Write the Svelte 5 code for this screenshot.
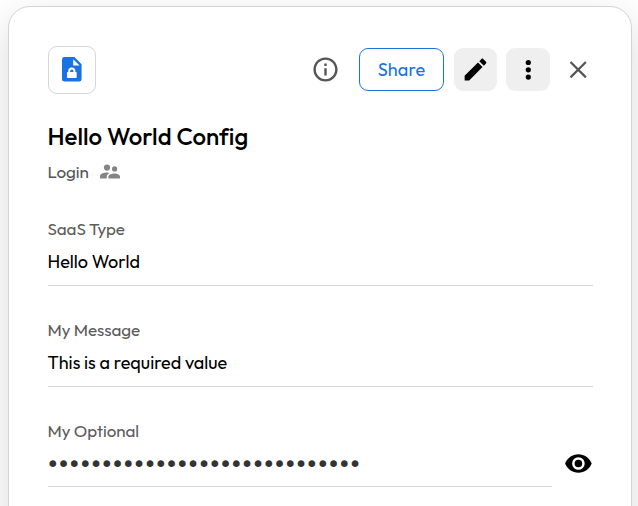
<script>
  const fields = [
    { label: 'SaaS Type', value: 'Hello World' },
    { label: 'My Message', value: 'This is a required value' },
  ];
  const masked = '•'.repeat(29);
</script>

<main class="page">
  <section class="card">
    <header class="toolbar">
      <div class="filebox">
        <svg width="20" height="25" viewBox="0 0 20 25">
          <path fill="#1a73df" fill-rule="evenodd" d="M2.4 0H12.4L19.6 7.2V22.2Q19.6 24.6 17.2 24.6H2.4Q0 24.6 0 22.2V2.4Q0 0 2.4 0ZM11.2 2.3V8.6H17.6ZM5 15.7Q5 15 5.7 15H6.2V14.2A3.6 3.6 0 0 1 13.4 14.2V15H14Q14.7 15 14.7 15.7V20.2Q14.7 20.9 14 20.9H5.7Q5 20.9 5 20.2ZM8.2 15H11.4V14.2A1.6 1.6 0 0 0 8.2 14.2Z" />
        </svg>
      </div>
      <div class="actions">
        <svg class="info" width="29" height="29" viewBox="0 0 24 24" fill="#555">
          <path d="M11 7h2v2h-2zm0 4h2v6h-2zm1-9C6.48 2 2 6.48 2 12s4.48 10 10 10 10-4.480 10-10S17.520 2 12 2m0 18c-4.410 0-8-3.590-8-8s3.590-8 8-8 8 3.590 8 8-3.590 8-8 8" />
        </svg>
        <button class="share">Share</button>
        <button class="square edit" aria-label="Edit">
          <svg width="29" height="29" viewBox="0 0 24 24"><path d="M3 17.250V21h3.750L17.810 9.940l-3.750-3.750zM20.710 7.040c.39-.39.39-1.020 0-1.410l-2.340-2.340c-.39-.39-1.020-.39-1.410 0l-1.830 1.830 3.750 3.750z" /></svg>
        </button>
        <button class="square more" aria-label="More">
          <svg width="6" height="22" viewBox="0 0 6 22"><circle cx="3.300" cy="3.500" r="2.600" /><circle cx="3.300" cy="10.800" r="2.600" /><circle cx="3.300" cy="18.100" r="2.600" /></svg>
        </button>
        <button class="close" aria-label="Close">
          <svg width="18" height="18" viewBox="0 0 18 18"><path d="M1.500 1L16.900 16.400M16.900 1L1.500 16.400" fill="none" stroke="#555" stroke-width="2.200" /></svg>
        </button>
      </div>
    </header>

    <h1>Hello World Config</h1>
    <div class="kind">
      <span>Login</span>
      <svg width="20" height="15" viewBox="0 0 20 15" fill="#858585">
        <circle cx="7" cy="3.600" r="3.100" />
        <circle cx="14.600" cy="4.900" r="2.600" />
        <path d="M0 14.500V12.200C0 9.400 4.500 8.500 7 8.500Q8.400 8.500 9.800 8.900C7.700 10 6.800 11 6.800 12.500V14.500ZM8.400 14.500V12.700C8.400 10.500 12 9.400 14.400 9.400S20 10.500 20 12.700V14.500Z" />
      </svg>
    </div>

    {#each fields as field}
      <div class="field">
        <div class="label">{field.label}</div>
        <div class="value">{field.value}</div>
      </div>
    {/each}
    <div class="secret">
      <div class="field">
        <div class="label">My Optional</div>
        <div class="value dots">{masked}</div>
      </div>
      <svg class="eye" width="28" height="19" viewBox="0 0 28 19">
        <path fill-rule="evenodd" d="M14.400 .2C20.400 .2 25.600 4 27.700 9.500C25.600 15 20.400 18.800 14.400 18.800S3.200 15 1.100 9.500C3.200 4 8.400 .2 14.400 .2ZM14.400 3.200A6.300 6.300 0 1 0 14.400 15.800A6.300 6.300 0 1 0 14.400 3.200ZM14.400 5.700A3.800 3.800 0 1 1 14.400 13.300A3.800 3.800 0 1 1 14.400 5.700Z" />
      </svg>
    </div>
  </section>
</main>

<style>
  .page {
    box-sizing: border-box;
    width: 638px;
    height: 506px;
    overflow: hidden;
    padding: 6px 6px 0 8px;
    background: #fff;
    font-family: Outfit, Lato, sans-serif;
    color: #000;
  }
  .card {
    box-sizing: border-box;
    height: 700px;
    padding: 39px 38px 0 39px;
    border: 1px solid #d4d4d4;
    border-radius: 22px;
    background: #fff;
    box-shadow: 0 14px 40px rgba(0, 0, 0, 0.15);
  }
  .toolbar { display: flex; justify-content: space-between; height: 48px; }
  .filebox {
    box-sizing: border-box;
    width: 48px;
    height: 48px;
    display: flex;
    align-items: center;
    justify-content: center;
    border: 1px solid #d6d6d6;
    border-radius: 9px;
  }
  .filebox svg { margin: 0 1px 1px 0; }
  .actions { display: flex; align-items: center; height: 47px; }
  button {
    box-sizing: border-box;
    display: flex;
    align-items: center;
    justify-content: center;
    margin: 0;
    padding: 0;
    border: 0;
    background: none;
    font: inherit;
  }
  .info { margin-right: 19px; }
  .share {
    width: 85px;
    height: 43px;
    border: 1px solid #1a76df;
    border-radius: 9px;
    color: #1a73df;
    font-size: 18px;
    letter-spacing: 0.1px;
  }
  .square { height: 43px; border-radius: 9px; background: #efefef; }
  .edit { width: 43px; margin: 0 9px 0 10px; }
  .more { width: 44px; }
  .close { width: 18px; height: 18px; margin: 0 6px 0 19px; }
  h1 {
    margin: 26px 0 0;
    text-indent: -0.5px;
    font-size: 24px;
    line-height: 32px;
    font-weight: 500;
    letter-spacing: 0.01px;
    white-space: nowrap;
  }
  .kind {
    display: flex;
    align-items: center;
    height: 24px;
    margin-top: 7px;
    color: #555;
    font-size: 17px;
    letter-spacing: -0.1px;
    text-indent: -0.5px;
  }
  .kind svg { margin: 1px 0 0 11px; }
  .field {
    box-sizing: border-box;
    height: 69px;
    margin-top: 32px;
    border-bottom: 1px solid #d8d8d8;
    white-space: nowrap;
    text-indent: -0.5px;
  }
  .kind + .field { margin-top: 34px; }
  .label { height: 24px; line-height: 24px; font-size: 17px; letter-spacing: -0.07px; color: #5c5c5c; }
  .value { margin-top: 9px; height: 24px; line-height: 24px; font-size: 18px; }
  .secret { display: flex; align-items: flex-start; }
  .secret .field { width: 504px; height: 68px; }
  .dots {
    margin: 9px 0 0 -1.5px;
    color: #333;
    font-family: "DejaVu Sans", sans-serif;
    font-size: 23px;
    letter-spacing: -2.77px;
  }
  .eye { margin: 67px 0 0 12px; }
</style>
